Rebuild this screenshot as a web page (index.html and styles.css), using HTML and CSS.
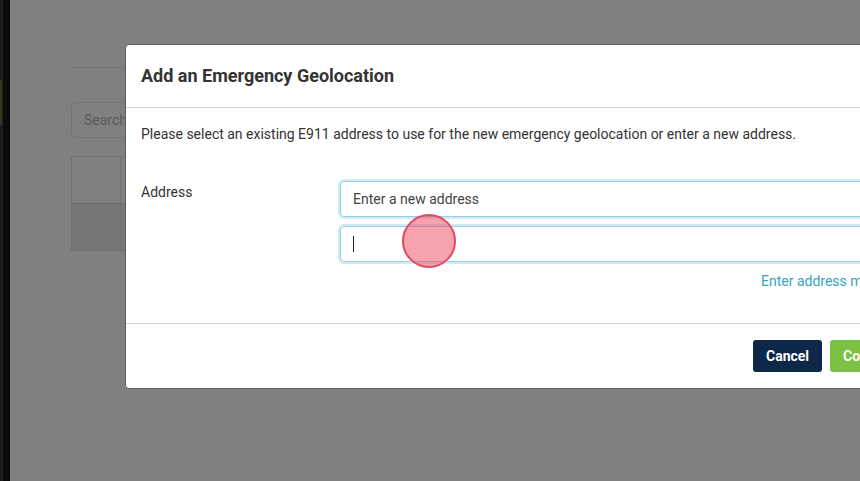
FILE: index.html
```html
<!DOCTYPE html>
<html>
<head>
<meta charset="utf-8">
<link rel="stylesheet" href="styles.css">
</head>
<body>
<div class="app">
  <div class="sidebar"><div class="sidebar-accent"></div></div>
  <div class="page">
    <div class="rule"></div>
    <div class="search">Search</div>
    <div class="table">
      <div class="trow thead"><div class="tcell first"></div><div class="tcell"></div></div>
      <div class="trow tdata"><div class="tcell first"></div><div class="tcell"></div></div>
    </div>
  </div>
</div>

<div class="modal">
  <div class="modal-header">
    <h2 class="modal-title">Add an Emergency Geolocation</h2>
  </div>
  <div class="modal-body">
    <p class="intro">Please select an existing E911 address to use for the new emergency geolocation or enter a new address.</p>
    <div class="form-row">
      <div class="label">Address</div>
      <div class="fields">
        <div class="input">Enter a new address</div>
        <div class="input"><span class="caret"></span></div>
        <div class="link-row"><span class="link">Enter address manually</span></div>
      </div>
    </div>
  </div>
  <div class="modal-footer">
    <button class="btn btn-cancel">Cancel</button>
    <button class="btn btn-confirm">Confirm</button>
  </div>
</div>

<div class="click-marker"></div>
</body>
</html>
```

FILE: styles.css
```css
html, body {
  margin: 0;
  padding: 0;
  width: 860px;
  height: 481px;
  overflow: hidden;
  background: #808080;
  font-family: Roboto, "Liberation Sans", sans-serif;
}

.app {
  display: flex;
  height: 481px;
}

.sidebar {
  width: 3px;
  background: #1c1c1c;
  border-right: 7px solid #0b0b0b;
  padding-top: 80px;
  box-sizing: content-box;
}

.sidebar-accent {
  height: 45px;
  width: 2px;
  background: #2c3a22;
}

.page {
  flex: 1;
  padding: 67px 0 0 61px;
}

.rule {
  height: 1px;
  background: #757575;
  width: 200px;
}

.search {
  margin-top: 34px;
  width: 200px;
  height: 36px;
  box-sizing: border-box;
  border: 1px solid #747474;
  border-radius: 6px;
  padding-left: 12px;
  font-size: 14px;
  line-height: 34px;
  color: #5a5a5a;
}

.table {
  margin-top: 18px;
  width: 200px;
  border: 1px solid #717171;
}

.trow {
  display: flex;
  height: 46px;
}

.thead {
  border-bottom: 1px solid #6c6c6c;
}

.tdata {
  background: #777779;
}

.tcell.first {
  width: 48px;
  border-right: 1px solid #717171;
}

.modal {
  position: absolute;
  left: 125px;
  top: 44px;
  width: 790px;
  height: 345px;
  box-sizing: border-box;
  background: #fff;
  border: 1px solid #5e5e5e;
  border-radius: 4px;
  display: flex;
  flex-direction: column;
  color: #333;
}

.modal-header {
  height: 62px;
  flex-shrink: 0;
  border-bottom: 1px solid #d2d2d2;
  padding: 0 15px;
  display: flex;
  align-items: center;
}

.modal-title {
  margin: 0;
  font-size: 18px;
  font-weight: 700;
  color: #333;
  padding-bottom: 1px;
}

.modal-body {
  flex: 1;
  padding: 16px 15px 0;
  border-bottom: 1px solid #d2d2d2;
}

.intro {
  margin: 0;
  font-size: 14px;
  line-height: 20px;
  color: #333;
}

.form-row {
  display: flex;
  margin-top: 37px;
}

.label {
  width: 199px;
  flex-shrink: 0;
  font-size: 14px;
  line-height: 20px;
  padding-top: 1px;
}

.fields {
  flex: 1;
  min-width: 0;
  display: flex;
  flex-direction: column;
  gap: 9px;
}

.input {
  height: 36px;
  box-sizing: border-box;
  border: 1px solid #97d0e3;
  border-radius: 4px;
  box-shadow: 0 0 0 2px #d2ecf5;
  padding-left: 12px;
  font-size: 14px;
  line-height: 34px;
  color: #444;
  display: flex;
  align-items: center;
}

.caret {
  display: block;
  width: 1px;
  height: 16px;
  background: #222;
}

.link-row {
  padding-left: 421px;
}

.link {
  font-size: 14px;
  line-height: 20px;
  color: #3aa3c0;
  white-space: nowrap;
}

.modal-footer {
  height: 64px;
  flex-shrink: 0;
  display: flex;
  align-items: center;
  padding-left: 627px;
  gap: 8px;
}

.btn {
  height: 32px;
  border: none;
  border-radius: 3px;
  font-family: Roboto, "Liberation Sans", sans-serif;
  font-size: 14px;
  font-weight: 700;
  color: #fff;
  padding: 0 13px;
}

.btn-cancel {
  background: #0c2748;
  width: 69px;
}

.btn-confirm {
  background: #7cc142;
}

.click-marker {
  position: absolute;
  left: 402px;
  top: 214px;
  width: 54px;
  height: 54px;
  box-sizing: border-box;
  border-radius: 50%;
  background: rgba(240, 70, 95, 0.5);
  border: 2px solid #e04a60;
}
```
